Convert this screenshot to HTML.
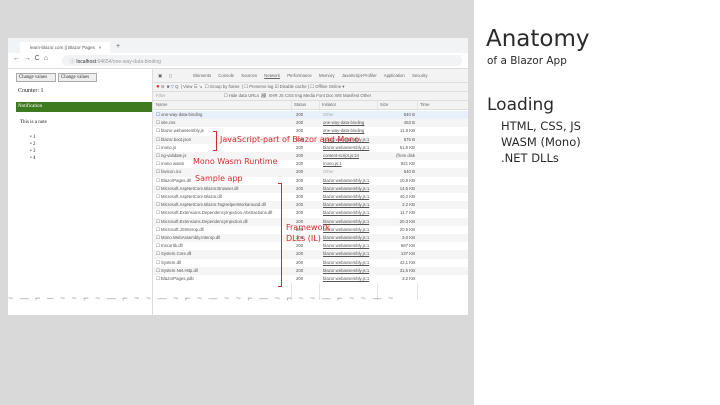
<!DOCTYPE html>
<html><head><meta charset="utf-8"><style>
*{margin:0;padding:0;box-sizing:border-box}
body{width:720px;height:405px;background:#fff;position:relative;overflow:hidden;font-family:"Liberation Sans",sans-serif}
.gray{position:absolute;left:0;top:0;width:474px;height:405px;background:#d9d9d9}
.shot{position:absolute;left:8px;top:38px;width:460px;height:277px;background:#fff;overflow:hidden}
.a{position:absolute;white-space:nowrap}
.t{font-size:4.5px;color:#666}
.row{position:absolute;left:145px;width:280px;height:8.2px;font-size:4.3px;color:#555;line-height:8.2px}
.row span{position:absolute}
.red{color:#d42a2a;font-family:"DejaVu Sans",sans-serif;position:absolute;white-space:nowrap}
.rt{position:absolute;font-family:"DejaVu Sans",sans-serif;color:#2a2a2a;white-space:nowrap}
</style></head><body>
<div class="gray"></div>
<div class="shot">
 <div class="a" style="left:0;top:0;width:460px;height:15px;background:#f1f3f4"></div>
 <div class="a" style="left:12px;top:4px;width:90px;height:11px;background:#fff;font-size:4.5px;color:#555;padding:3px 0 0 10px">learn-blazor.com || Blazor Pages &nbsp; ×</div>
 <div class="a t" style="left:108px;top:5px;font-size:7px">+</div>
 <div class="a t" style="left:5px;top:17px;font-size:7px;color:#555">← &nbsp;→ &nbsp;C &nbsp;⌂</div>
 <div class="a" style="left:54px;top:17px;width:400px;height:11px;background:#f1f3f4;border-radius:5px;font-size:5px;color:#999;padding:3px 0 0 8px">ⓘ <b style="color:#333;font-weight:normal">localhost</b>:64654/one-way-data-binding</div>
 <div class="a" style="left:0;top:30px;width:460px;height:1px;background:#ddd"></div>
 <div class="a" style="left:8px;top:35px;width:40px;height:9px;border:1px solid #aaa;background:#eee;font-size:4.8px;color:#333;padding:1px 2px;font-family:'Liberation Serif',serif">Change values</div>
 <div class="a" style="left:50px;top:35px;width:39px;height:9px;border:1px solid #aaa;background:#eee;font-size:4.8px;color:#333;padding:1px 2px;font-family:'Liberation Serif',serif">Change values</div>
 <div class="a" style="left:10px;top:50px;font-size:6px;font-family:'Liberation Serif',serif;color:#222">Counter: 1</div>
 <div class="a" style="left:8px;top:64px;width:136px;height:10px;background:#3e7b1f;font-size:5px;color:#fff;padding:2px 2px;font-family:'Liberation Serif',serif">Notification</div>
 <div class="a" style="left:12px;top:82px;font-size:5px;font-family:'Liberation Serif',serif;color:#222">This is a note</div>
 <div class="a" style="left:22px;top:96px;font-size:5px;line-height:7px;font-family:'Liberation Serif',serif;color:#222">• 1<br>• 2<br>• 3<br>• 4</div>
 <div class="a" style="left:144px;top:31px;width:1px;height:246px;background:#ddd"></div>
 <div class="a" style="left:145px;top:31px;width:315px;height:31px;background:#f3f3f3"></div>
 <div class="a t" style="left:150px;top:35px;font-size:4.3px;word-spacing:6px">▣ ▯ &nbsp; Elements Console Sources <u>Network</u> Performance Memory JavaScript-Profiler Application Security</div>
 <div class="a" style="left:145px;top:44px;width:315px;height:1px;background:#ddd"></div>
 <div class="a t" style="left:148px;top:46px;font-size:4.3px"><span style="color:#d33;font-size:6px">●</span> ⊘ &nbsp;■ <span style="color:#48c">▽</span> Q &nbsp;| View ☰ ↘ &nbsp;☐ Group by frame &nbsp;| ☐ Preserve log ☑ Disable cache | ☐ Offline Online ▾</div>
 <div class="a" style="left:145px;top:53px;width:315px;height:1px;background:#ddd"></div>
 <div class="a t" style="left:148px;top:55px;font-size:4.3px;color:#aaa">Filter<span style="color:#666;margin-left:58px">☐ Hide data URLs &nbsp;<b style="background:#ccc;font-weight:normal">All</b> &nbsp;XHR JS CSS Img Media Font Doc WS Manifest Other</span></div>
 <div class="a" style="left:145px;top:62px;width:315px;height:10px;background:#f3f3f3;border-bottom:1px solid #ddd;border-top:1px solid #ddd"></div>
 <div class="a t" style="left:148px;top:64px;font-size:4.3px">Name</div>
 <div class="a t" style="left:286px;top:64px;font-size:4.3px">Status</div>
 <div class="a t" style="left:314px;top:64px;font-size:4.3px">Initiator</div>
 <div class="a t" style="left:372px;top:64px;font-size:4.3px">Size</div>
 <div class="a t" style="left:412px;top:64px;font-size:4.3px">Time</div>
 <div class="a" style="left:283px;top:62px;width:1px;height:200px;background:#e4e4e4"></div>
 <div class="a" style="left:311px;top:62px;width:1px;height:200px;background:#e4e4e4"></div>
 <div class="a" style="left:369px;top:62px;width:1px;height:200px;background:#e4e4e4"></div>
 <div class="a" style="left:409px;top:62px;width:1px;height:200px;background:#e4e4e4"></div>
 <div id="rows"></div>
 <div class="a" style="left:0;top:255px;width:460px;height:12px;font-size:9px;color:#999;letter-spacing:2px;overflow:hidden">~ — ⌐ ─ ~ ~ ⌐ ~ — ⌐ ~ ~ — ~ ⌐ ~ — ~ ~ ⌐ — ~ ⌐ ~ ~ — ⌐ ~ ~ — ~</div>
 <div class="a" style="left:205px;top:93px;width:4px;height:20px;border:1px solid #d42a2a;border-left:none"></div>
 <div class="red" style="left:212px;top:97px;font-size:8px">JavaScript-part of Blazor and Mono</div>
 <div class="red" style="left:185px;top:119px;font-size:8px">Mono Wasm Runtime</div>
 <div class="red" style="left:187px;top:136px;font-size:8px">Sample app</div>
 <div class="a" style="left:270px;top:145px;width:4px;height:104px;border:1px solid #d42a2a;border-left:none"></div>
 <div class="red" style="left:278px;top:184px;font-size:8px;line-height:11px">Framework<br>DLLs (IL)</div>
</div>
<div class="rt" style="left:486px;top:26px;font-size:23px">Anatomy</div>
<div class="rt" style="left:487px;top:55px;font-size:10.5px">of a Blazor App</div>
<div class="rt" style="left:487px;top:95px;font-size:17px">Loading</div>
<div class="rt" style="left:501px;top:118px;font-size:11.5px;line-height:16px">HTML, CSS, JS<br>WASM (Mono)<br>.NET DLLs</div>
<script>
var r=[["one-way-data-binding","Other","540 B"],["site.css","one-way-data-binding","453 B"],["blazor.webassembly.js","one-way-data-binding","11.8 KB"],["blazor.boot.json","blazor.webassembly.js:1","576 B"],["mono.js","blazor.webassembly.js:1","51.8 KB"],["ng-validate.js","content-script.js:24","(from disk cache)"],["mono.wasm","mono.js:1","821 KB"],["favicon.ico","Other","540 B"],["BlazorPages.dll","blazor.webassembly.js:1","10.8 KB"],["Microsoft.AspNetCore.Blazor.Browser.dll","blazor.webassembly.js:1","14.6 KB"],["Microsoft.AspNetCore.Blazor.dll","blazor.webassembly.js:1","40.2 KB"],["Microsoft.AspNetCore.Blazor.TagHelperWorkaround.dll","blazor.webassembly.js:1","2.2 KB"],["Microsoft.Extensions.DependencyInjection.Abstractions.dll","blazor.webassembly.js:1","11.7 KB"],["Microsoft.Extensions.DependencyInjection.dll","blazor.webassembly.js:1","20.3 KB"],["Microsoft.JSInterop.dll","blazor.webassembly.js:1","20.5 KB"],["Mono.WebAssembly.Interop.dll","blazor.webassembly.js:1","3.0 KB"],["mscorlib.dll","blazor.webassembly.js:1","697 KB"],["System.Core.dll","blazor.webassembly.js:1","137 KB"],["System.dll","blazor.webassembly.js:1","42.1 KB"],["System.Net.Http.dll","blazor.webassembly.js:1","31.5 KB"],["BlazorPages.pdb","blazor.webassembly.js:1","3.2 KB"]];
var h="";r.forEach(function(x,i){var bg=i==0?"#e8f0fb":(i%2?"#f5f5f5":"#fff");var u=(x[1]=="Other"||x[1].indexOf("(")==0)?"color:#aaa":"text-decoration:underline;color:#555";
h+='<div class="row" style="top:'+(73+i*8.2)+'px;background:'+bg+';width:315px"><span style="left:3px">☐ '+x[0]+'</span><span style="left:143px">200</span><span style="left:170px;'+u+'">'+x[1]+'</span><span style="left:230px;width:32px;text-align:right">'+x[2]+'</span></div>';});
document.getElementById("rows").innerHTML=h;
</script>
</body></html>
